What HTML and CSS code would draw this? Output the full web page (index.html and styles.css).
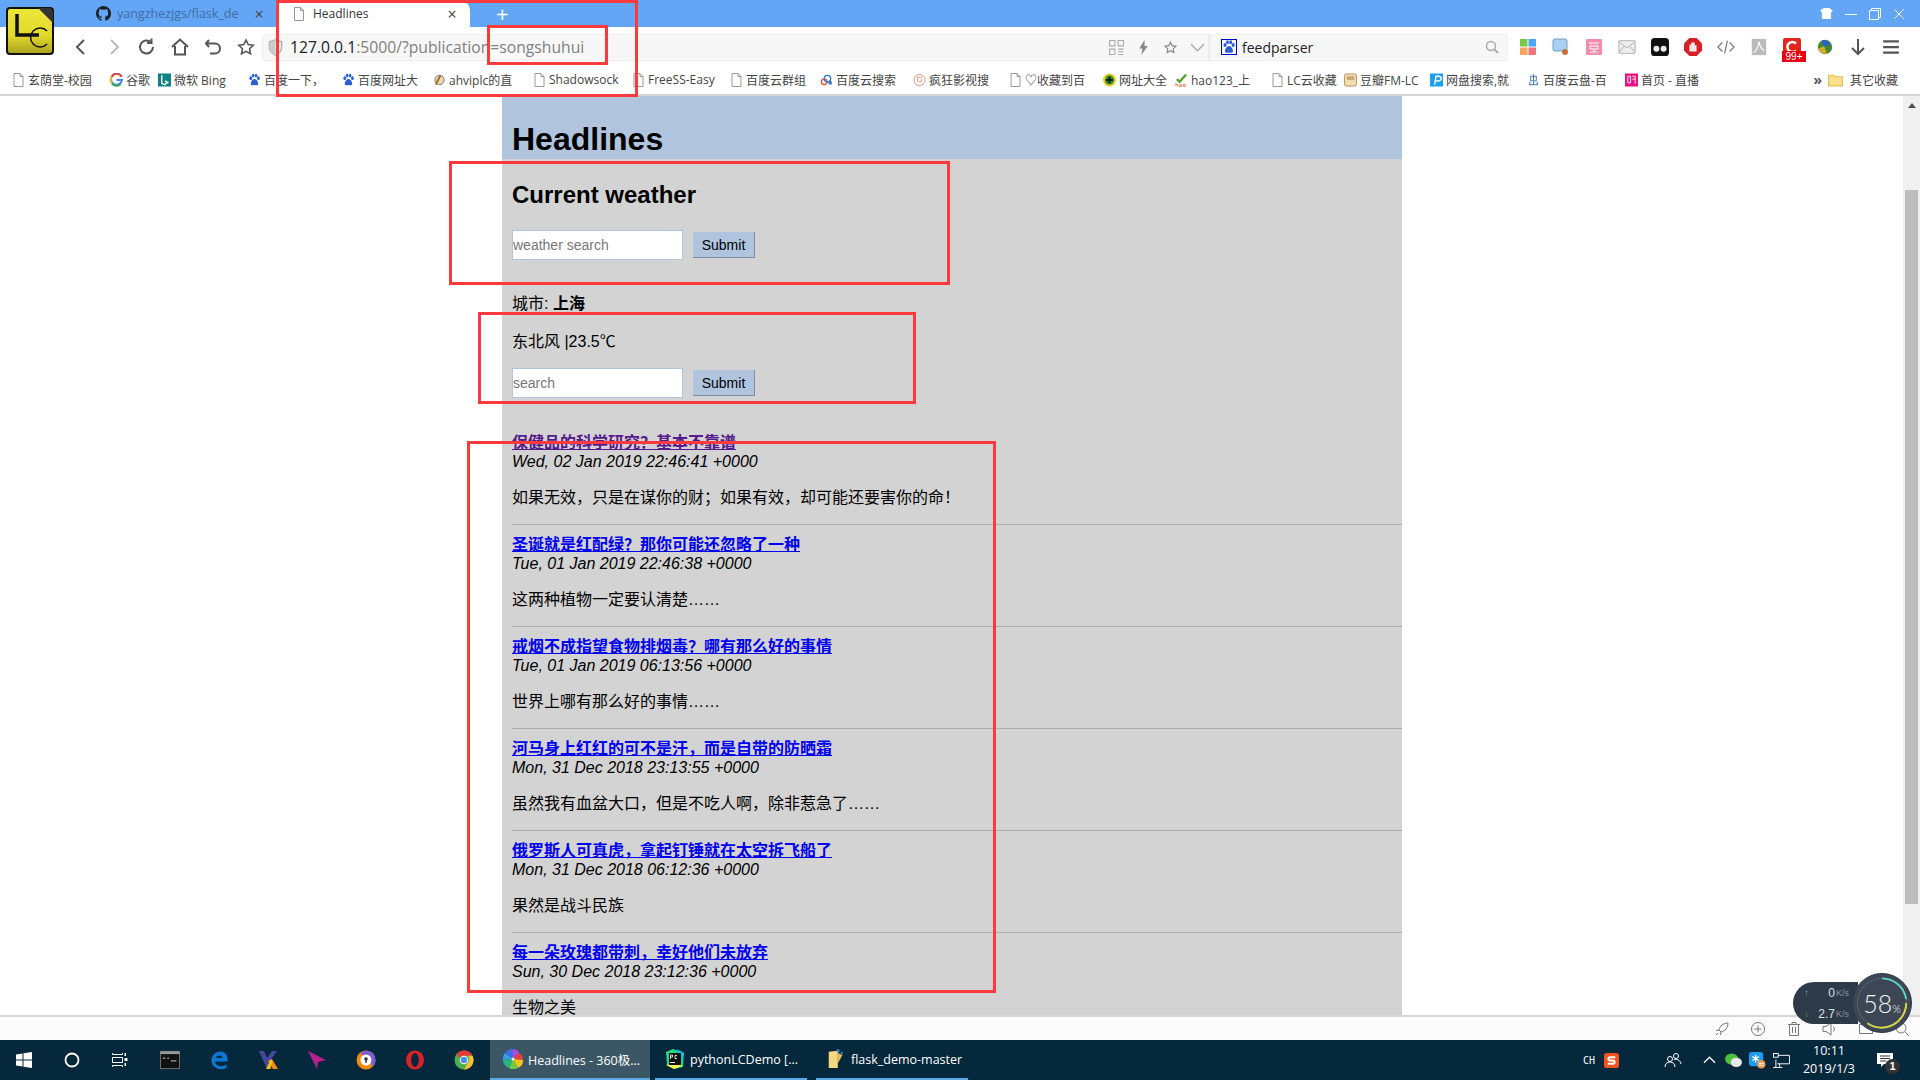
FILE: index.html
```html
<!DOCTYPE html>
<html lang="zh">
<head>
    <meta charset="UTF-8">
    <title>Headlines</title>
    <link rel="stylesheet" href="styles.css">
</head>
<body>
    <svg class="defs" width="0" height="0" aria-hidden="true">
        <symbol id="doc" viewBox="0 0 12 14">
            <path d="M1.5 .5h6l3 3v10h-9z M7.5 .5v3h3" fill="#fff" stroke="#999"/>
        </symbol>
        <symbol id="paw" viewBox="0 0 14 14">
            <ellipse cx="3" cy="5" rx="1.5" ry="2" fill="#2a5fd8"/>
            <ellipse cx="5.5" cy="2.2" rx="1.4" ry="2" fill="#2a5fd8"/>
            <ellipse cx="8.7" cy="2.2" rx="1.4" ry="2" fill="#2a5fd8"/>
            <ellipse cx="11.2" cy="5" rx="1.5" ry="2" fill="#2a5fd8"/>
            <path d="M7 6c-2 0-4 3-4 5s2 2 4 1.4c2 .6 4 .6 4-1.4s-2-5-4-5z" fill="#2a5fd8"/>
        </symbol>
        <linearGradient id="logo-fill" x1="0" y1="0" x2="0" y2="1">
            <stop offset="0" stop-color="#ece63a"/>
            <stop offset=".6" stop-color="#e2d92e"/>
            <stop offset="1" stop-color="#a8a01c"/>
        </linearGradient>
    </svg>

    <!-- Title bar and tabs -->
    <header class="titlebar">
        <div class="tab tab-idle">
            <svg class="tab-icon" viewBox="0 0 16 16"><path fill="#1b1f23" d="M8 0a8 8 0 0 0-2.5 15.6c.4.1.5-.2.5-.4v-1.4c-2.2.5-2.7-1-2.7-1-.4-.9-.9-1.200-.9-1.200-.7-.5.1-.5.1-.5.8.1 1.200.8 1.200.8.7 1.200 1.900.9 2.300.7.1-.5.3-.9.5-1.100-1.800-.2-3.700-.9-3.700-4 0-.9.3-1.600.8-2.100-.1-.2-.4-1 .1-2.100 0 0 .7-.2 2.200.8a7.600 7.600 0 0 1 4 0c1.500-1 2.200-.8 2.200-.8.4 1.100.2 1.900.1 2.100.5.6.8 1.300.8 2.100 0 3.100-1.900 3.800-3.700 4 .3.300.6.800.6 1.500v2.200c0 .2.1.5.6.4A8 8 0 0 0 8 0z"/></svg>
            <span class="tab-title">yangzhezjgs/flask_de</span>
            <span class="tab-close">×</span>
        </div>
        <div class="tab tab-active">
            <svg class="tab-icon tab-doc"><use href="#doc"/></svg>
            <span class="tab-title">Headlines</span>
            <span class="tab-close">×</span>
        </div>
        <span class="new-tab">+</span>
        <div class="window-btns">
            <svg viewBox="0 0 14 12" class="win-shirt"><path d="M4 0h6l4 3-2 2v7H2V5L0 3z" fill="#fff"/></svg>
            <svg viewBox="0 0 12 12" class="win-btn"><path d="M0 6.500h12" stroke="#fff" fill="none"/></svg>
            <svg viewBox="0 0 12 12" class="win-btn"><path d="M.5 2.500h9v9h-9z M2.500 2.500v-2h9v9h-2" stroke="#fff" fill="none"/></svg>
            <svg viewBox="0 0 12 12" class="win-btn"><path d="M1 1l10 10M11 1L1 11" stroke="#fff" fill="none"/></svg>
        </div>
    </header>

    <!-- Toolbar -->
    <nav class="toolbar">
        <div class="nav-btns">
            <svg viewBox="0 0 20 20"><path d="M13 3l-7 7 7 7" stroke="#555" stroke-width="2" fill="none"/></svg>
            <svg viewBox="0 0 20 20"><path d="M7 3l7 7-7 7" stroke="#bbb" stroke-width="2" fill="none"/></svg>
            <svg viewBox="0 0 20 20"><path d="M16 10a6.500 6.500 0 1 1-2-4.700M14.500 1.500v4.500H10" stroke="#555" stroke-width="2" fill="none"/></svg>
            <svg viewBox="0 0 20 20"><path d="M2 10l8-7.500 8 7.500M5 9v8.500h10V9" stroke="#555" stroke-width="2" fill="none"/></svg>
            <svg viewBox="0 0 20 20"><path d="M6 3L3 6.500 6 10M3.500 6.500H12a4.800 4.800 0 0 1 0 10H7" stroke="#555" stroke-width="2" fill="none"/></svg>
            <svg viewBox="0 0 20 20"><path d="M10 3l2.200 4.600 5 .7-3.600 3.500.9 5L10 14.400l-4.500 2.400.9-5L2.800 8.300l5-.7z" stroke="#555" stroke-width="1.600" fill="none"/></svg>
        </div>
        <div class="address">
            <svg class="shield" viewBox="0 0 16 18"><path d="M8 1l6.500 2v6c0 4-3 6.500-6.500 8-3.500-1.500-6.500-4-6.500-8V3z" fill="none" stroke="#aaa" stroke-width="1.500"/><path d="M8 1v16c-3.500-1.500-6.500-4-6.500-8V3z" fill="#ccc"/></svg>
            <span class="url"><span class="url-host">127.0.0.1</span>:5000/?publication=songshuhui</span>
            <div class="address-icons">
                <svg viewBox="0 0 14 14"><path d="M.5.5h5v5h-5z M8.500.5h5v5h-5z M.5 8.500h5v5h-5z M8.500 8.500h5 M8.500 11h5 M8.500 13.500h5" stroke="#aaa" fill="none"/></svg>
                <svg viewBox="0 0 14 14"><path d="M8 0L3 8h3l-1 6 6-8.500H8z" fill="#888"/></svg>
                <svg viewBox="0 0 20 20"><path d="M10 3l2.200 4.600 5 .7-3.600 3.500.9 5L10 14.400l-4.500 2.400.9-5L2.800 8.300l5-.7z" stroke="#888" stroke-width="1.600" fill="none"/></svg>
                <svg viewBox="0 0 14 14"><path d="M1 4l6 6 6-6" stroke="#aaa" stroke-width="1.500" fill="none"/></svg>
            </div>
        </div>
        <div class="search-box">
            <span class="search-logo"><svg viewBox="0 0 14 14"><use href="#paw"/></svg></span>
            <span class="search-text">feedparser</span>
            <svg class="search-icon" viewBox="0 0 14 14"><circle cx="6" cy="6" r="4.500" stroke="#aaa" stroke-width="1.500" fill="none"/><path d="M9.500 9.500l3.500 3.500" stroke="#aaa" stroke-width="2"/></svg>
        </div>
        <div class="ext-icons">
            <svg viewBox="0 0 18 18"><rect x="1" y="1" width="7.500" height="7.500" fill="#7ac943"/><rect x="9.500" y="1" width="7.500" height="7.500" fill="#4aa8f5"/><rect x="1" y="9.500" width="7.500" height="7.500" fill="#f7a660"/><rect x="9.500" y="9.500" width="7.500" height="7.500" fill="#f2737c"/></svg>
            <svg viewBox="0 0 18 18"><rect x="1" y="1" width="14" height="12" rx="2" fill="#a9d2f2" stroke="#6f9fc7"/><circle cx="13" cy="14" r="3" fill="#c96f36"/></svg>
            <svg viewBox="0 0 18 18"><rect x="1" y="1" width="16" height="16" rx="1" fill="#f58cae"/><path d="M4 5h10M5 8h8v3H5zM9 11v5M5 15l3-2M13 15l-3-2" stroke="#fff" fill="none"/></svg>
            <svg viewBox="0 0 20 18"><rect x="1" y="2" width="18" height="14" rx="1" fill="#eee" stroke="#aaa"/><path d="M1 3l9 7 9-7M1 15l6-7M19 15l-6-7" stroke="#aaa" fill="none"/></svg>
            <svg viewBox="0 0 20 20"><rect width="20" height="20" rx="4" fill="#111"/><circle cx="6" cy="12" r="3.300" fill="#eee"/><circle cx="14" cy="12" r="3.300" fill="#eee"/></svg>
            <svg viewBox="0 0 20 20"><path d="M6 0h8l6 6v8l-6 6H6l-6-6V6z" fill="#d81f26"/><path d="M7 15V7.500M9 15V5M11 15V5M13 15V8" stroke="#fff" stroke-width="1.800"/></svg>
            <svg viewBox="0 0 20 18"><path d="M6 4L1 9l5 5M14 4l5 5-5 5M11.500 2l-3 14" stroke="#777" stroke-width="1.300" fill="none"/></svg>
            <svg viewBox="0 0 18 20"><rect x="1" y="1" width="16" height="18" fill="#bbb"/><path d="M3 16c3-1 5-6 6-12 1 5 3 9 6 10" stroke="#fff" stroke-width="1.200" fill="none"/></svg>
            <span class="ext-badge-wrap">
                <svg viewBox="0 0 18 18"><rect width="18" height="18" rx="2" fill="#e1251b"/><path d="M13 5.500a5 5 0 1 0 0 7" stroke="#fff" stroke-width="2.500" fill="none"/></svg>
                <span class="ext-badge">99+</span>
            </span>
            <svg viewBox="0 0 20 20"><circle cx="10" cy="10" r="8" fill="#3e8a2e"/><path d="M6 3c4-2 8 0 10 4l-7 3z" fill="#2a62c9"/><path d="M2 12l7-3 3 8c-4 2-8-1-10-5z" fill="#d9a92a"/></svg>
            <svg viewBox="0 0 16 18"><path d="M8 1v15M2 10l6 6 6-6" stroke="#555" stroke-width="2" fill="none"/></svg>
            <svg viewBox="0 0 16 14"><path d="M1 2h14M1 7h14M1 12h14" stroke="#555" stroke-width="2" fill="none"/></svg>
        </div>
    </nav>

    <!-- Bookmarks -->
    <div class="bookmarks">
        <a class="bm"><svg class="bm-icon"><use href="#doc"/></svg>玄荫堂-校园</a>
        <a class="bm"><svg class="bm-icon" viewBox="0 0 14 14"><path d="M12.500 3.500A6 6 0 1 0 13 7H7" stroke="#4285f4" stroke-width="2" fill="none"/><path d="M12.500 3.500A6 6 0 0 0 2 3.500" stroke="#ea4335" stroke-width="2" fill="none"/><path d="M2 3.500a6 6 0 0 0 0 7" stroke="#fbbc05" stroke-width="2" fill="none"/><path d="M2 10.500a6 6 0 0 0 9.500 1" stroke="#34a853" stroke-width="2" fill="none"/></svg>谷歌</a>
        <a class="bm"><svg class="bm-icon" viewBox="0 0 14 14"><rect width="14" height="14" fill="#0c8484"/><path d="M4 2v8.500l3 1.500 3.500-2.500-3-1.500" stroke="#fff" stroke-width="1.500" fill="none"/></svg>微软 Bing</a>
        <a class="bm"><svg class="bm-icon"><use href="#paw"/></svg>百度一下，</a>
        <a class="bm"><svg class="bm-icon"><use href="#paw"/></svg>百度网址大</a>
        <a class="bm"><svg class="bm-icon" viewBox="0 0 14 14"><circle cx="7" cy="7" r="5" fill="#e9d9b0" stroke="#777"/><path d="M3 12l5-10" stroke="#a5671f" stroke-width="2"/></svg>ahviplc的直</a>
        <a class="bm"><svg class="bm-icon"><use href="#doc"/></svg>Shadowsock</a>
        <a class="bm"><svg class="bm-icon"><use href="#doc"/></svg>FreeSS-Easy</a>
        <a class="bm"><svg class="bm-icon"><use href="#doc"/></svg>百度云群组</a>
        <a class="bm"><svg class="bm-icon" viewBox="0 0 14 14"><circle cx="4.500" cy="9" r="3" fill="none" stroke="#e8513a" stroke-width="1.500"/><circle cx="8" cy="5.500" r="3.500" fill="none" stroke="#2c7bd8" stroke-width="1.500"/><circle cx="11" cy="10" r="2" fill="#2c7bd8"/></svg>百度云搜索</a>
        <a class="bm"><svg class="bm-icon" viewBox="0 0 14 14"><circle cx="7" cy="7" r="6" fill="#fff" stroke="#e98c78"/><path d="M4 4h6M5 4v5M9 6v3H6" stroke="#e98c78" fill="none"/></svg>疯狂影视搜</a>
        <a class="bm"><svg class="bm-icon"><use href="#doc"/></svg>♡收藏到百</a>
        <a class="bm"><svg class="bm-icon" viewBox="0 0 14 14"><circle cx="7" cy="7" r="7" fill="#f3c820"/><circle cx="7" cy="7" r="5" fill="#2d9a2d"/><path d="M3.500 7h7M7 3.500v7" stroke="#111" stroke-width="2"/></svg>网址大全</a>
        <a class="bm"><svg class="bm-icon" viewBox="0 0 14 14"><path d="M2 6l3 3 7-8" stroke="#4fa528" stroke-width="2.500" fill="none"/><path d="M1 14v-4M1 12h2v2M5 12h2v2H5zM9 12h2v2H9z" stroke="#e9621c" stroke-width=".8" fill="none"/></svg>hao123_上</a>
        <a class="bm"><svg class="bm-icon"><use href="#doc"/></svg>LC云收藏</a>
        <a class="bm"><svg class="bm-icon" viewBox="0 0 14 14"><rect x=".5" y=".5" width="13" height="13" rx="2" fill="#f1dcb4" stroke="#b78c52"/><rect x="3" y="3" width="8" height="4" fill="#c9a877"/></svg>豆瓣FM-LC</a>
        <a class="bm"><svg class="bm-icon" viewBox="0 0 14 14"><rect width="14" height="14" fill="#1b9df0"/><path d="M5 12l1.500-9h3a2 2 0 0 1 0 5H6" stroke="#fff" stroke-width="1.500" fill="none"/></svg>网盘搜索,就</a>
        <a class="bm"><svg class="bm-icon" viewBox="0 0 14 14"><path d="M4 3h6v5H4zM7 1v7M2 12h10M3 9v3M7 9v3M11 9v3" stroke="#3670a8" fill="none"/></svg>百度云盘-百</a>
        <a class="bm"><svg class="bm-icon" viewBox="0 0 14 14"><rect width="14" height="14" fill="#e6127d"/><path d="M3 3h3v7H3zM8 3h3v8M8 6h3" stroke="#fff" fill="none"/></svg>首页 - 直播</a>
        <span class="bm-more">»</span>
        <a class="bm"><svg class="bm-icon bm-folder" viewBox="0 0 14 12"><path d="M.5 1.500h5l1 1.500h7v8.500H.5z" fill="#fbe08a" stroke="#e2bf5a"/></svg>其它收藏</a>
    </div>

    <!-- Page in the browser window -->
    <div class="viewport">
        <main class="page">
            <div class="page-header">
                <h1>Headlines</h1>
            </div>
            <div class="page-body">
                <h2>Current weather</h2>
                <form class="search-form">
                    <input type="text" placeholder="weather search">
                    <button type="button">Submit</button>
                </form>
                <p class="city">城市: <b>上海</b></p>
                <p class="wind">东北风 |23.5℃</p>
                <form class="search-form">
                    <input type="text" placeholder="search">
                    <button type="button">Submit</button>
                </form>

                <article class="item">
                    <a class="visited" href="#"><b>保健品的科学研究？基本不靠谱</b></a>
                    <i>Wed, 02 Jan 2019 22:46:41 +0000</i>
                    <p>如果无效，只是在谋你的财；如果有效，却可能还要害你的命！</p>
                </article>
                <article class="item">
                    <a href="#"><b>圣诞就是红配绿？那你可能还忽略了一种</b></a>
                    <i>Tue, 01 Jan 2019 22:46:38 +0000</i>
                    <p>这两种植物一定要认清楚……</p>
                </article>
                <article class="item">
                    <a href="#"><b>戒烟不成指望食物排烟毒？哪有那么好的事情</b></a>
                    <i>Tue, 01 Jan 2019 06:13:56 +0000</i>
                    <p>世界上哪有那么好的事情……</p>
                </article>
                <article class="item">
                    <a href="#"><b>河马身上红红的可不是汗，而是自带的防晒霜</b></a>
                    <i>Mon, 31 Dec 2018 23:13:55 +0000</i>
                    <p>虽然我有血盆大口，但是不吃人啊，除非惹急了……</p>
                </article>
                <article class="item">
                    <a href="#"><b>俄罗斯人可真虎，拿起钉锤就在太空拆飞船了</b></a>
                    <i>Mon, 31 Dec 2018 06:12:36 +0000</i>
                    <p>果然是战斗民族</p>
                </article>
                <article class="item">
                    <a href="#"><b>每一朵玫瑰都带刺，幸好他们未放弃</b></a>
                    <i>Sun, 30 Dec 2018 23:12:36 +0000</i>
                    <p>生物之美</p>
                </article>
            </div>
        </main>
        <div class="scrollbar">
            <span class="scroll-up"></span>
            <span class="scroll-thumb"></span>
        </div>
    </div>

    <!-- Status bar -->
    <div class="statusbar">
        <svg viewBox="0 0 16 16"><path d="M14 2c-5 0-8 3-9 7l2 2c4-1 7-4 7-9zM5 9L2 9.500M7 11l-.5 3M4 12l-2 2" stroke="#777" fill="none"/></svg>
        <svg viewBox="0 0 16 16"><circle cx="8" cy="8" r="6.500" stroke="#777" fill="none"/><path d="M8 4.500v7M4.500 8h7" stroke="#777"/></svg>
        <svg viewBox="0 0 16 16"><path d="M2 3.500h12M6 3.500V1.500h4v2M3.500 3.500v11h9v-11M6.500 6v6M9.500 6v6" stroke="#777" fill="none"/></svg>
        <svg viewBox="0 0 16 16"><path d="M1 5.500h3L9 2v12L4 10.500H1zM11.500 5.500a4 4 0 0 1 0 5" stroke="#777" fill="none"/></svg>
        <svg viewBox="0 0 16 16"><path d="M1.500 3.500h13v9h-13z" stroke="#777" fill="none"/></svg>
        <svg viewBox="0 0 16 16"><circle cx="7" cy="7" r="5" stroke="#777" fill="none"/><path d="M11 11l4 4" stroke="#777"/></svg>
    </div>

    <!-- Taskbar -->
    <footer class="taskbar">
        <div class="task-icons">
            <svg viewBox="0 0 16 16"><path d="M0 2.500l6.500-1v6H0zM7.500 1.300L16 0v7.500H7.500zM0 8.500h6.500v6l-6.500-1zM7.500 8.500H16V16l-8.500-1.300z" fill="#fff"/></svg>
            <svg viewBox="0 0 16 16"><circle cx="8" cy="8" r="6.500" stroke="#fff" stroke-width="1.800" fill="none"/></svg>
            <svg viewBox="0 0 16 16"><path d="M.5 1v1.500h10V1M.5 5.500h10v5H.5zM.5 15v-1.500h10V15" stroke="#fff" fill="none"/><rect x="12.500" y="1" width="1.500" height="3" fill="#fff"/><rect x="12.500" y="6" width="3" height="3" fill="#fff"/><rect x="12.500" y="11" width="1.500" height="3" fill="#fff"/></svg>
            <svg viewBox="0 0 22 20"><rect x=".5" y=".5" width="21" height="19" fill="#111" stroke="#777"/><rect x=".5" y=".5" width="21" height="3" fill="#999"/><path d="M3 8h3M8 8h2M12 11h6" stroke="#ddd"/></svg>
            <svg viewBox="0 0 20 20"><path d="M18.500 11.500H6c.3 5 7.500 6 11.500 3v3.500c-6 2.500-15 .5-15-7.500C2.500 4 9 0 14 2 18 3.500 19 8 18.500 11.500zM13.500 8c0-3.500-6-3.500-7 0z" fill="#0c78d6"/></svg>
            <svg viewBox="0 0 20 20"><path d="M1 1h5l8 18H9z" fill="#46489e"/><path d="M19 1h-5L7 11l2 4z" fill="#46489e"/><path d="M10 11l4-2 6 10h-5z" fill="#f28c0f"/><path d="M8 19l5-10 1.500 3L12 19z" fill="#fac30a"/></svg>
            <svg viewBox="0 0 20 20"><path d="M1 1l18 9-8 2-1 7-3-6z" fill="#b8208e"/></svg>
            <svg viewBox="0 0 20 20"><circle cx="10" cy="10" r="9.500" fill="#f28c0f"/><path d="M10 .5A9.500 9.500 0 0 1 19.500 10c0 3-1 5-3 7-2-9-7-11-12-13 2-2 3.500-3.500 5.500-3.500z" fill="#7a5dd8"/><circle cx="10" cy="10" r="5.500" fill="#fff"/><circle cx="10" cy="9" r="1.800" fill="#333"/><rect x="9.300" y="9.500" width="1.400" height="3.500" fill="#333"/></svg>
            <svg viewBox="0 0 20 20"><ellipse cx="10" cy="10" rx="9" ry="9.500" fill="#d8232a"/><ellipse cx="10" cy="10" rx="3.800" ry="7" fill="#05283d"/></svg>
            <svg viewBox="0 0 20 20"><circle cx="10" cy="10" r="9.500" fill="#4caf50"/><path d="M10 .5a9.500 9.500 0 0 1 8.500 5.200H10a4.300 4.300 0 0 0-4 2.800L2.700 4A9.500 9.500 0 0 1 10 .5z" fill="#e53935"/><path d="M18.500 5.700A9.500 9.500 0 0 1 10 19.500l4-7a4.300 4.300 0 0 0-.2-6.800z" fill="#fbc02d"/><circle cx="10" cy="10" r="4.300" fill="#fff"/><circle cx="10" cy="10" r="3.300" fill="#4a90e2"/></svg>
        </div>
        <div class="task-item task-item-active">
            <svg viewBox="0 0 20 20"><path d="M10 10V0a7 7 0 0 1 6 4z" fill="#b04be0"/><path d="M10 10l6-6a8 8 0 0 1 4 7z" fill="#e8403a"/><path d="M10 10l10 1a8 8 0 0 1-5 8z" fill="#f5c518"/><path d="M10 10l5 9a9 9 0 0 1-9 0z" fill="#74c947"/><path d="M10 10l-4 9a9 9 0 0 1-6-8z" fill="#29b57e"/><path d="M10 10L0 11a9 9 0 0 1 2-7z" fill="#33a2e8"/><path d="M10 10L2 4a9 9 0 0 1 8-4z" fill="#3b6fe0"/><circle cx="10" cy="10" r="1.500" fill="#fff"/></svg>
            <span>Headlines - 360极...</span>
        </div>
        <div class="task-item">
            <svg viewBox="0 0 20 20"><path d="M1 3l7-3 11 4-1 14-9 2-7-4z" fill="#21d789"/><path d="M12 0l7 4-2 8z" fill="#07c3f2"/><path d="M1 16l8 4 8-3-2-4z" fill="#fcf84a"/><rect x="4" y="4" width="12" height="12" fill="#111"/><path d="M5.500 10V6h2v2h-2M12 6.500h-2v3h2" stroke="#fff" stroke-width=".8" fill="none"/><rect x="5" y="13" width="5" height="1" fill="#fff"/></svg>
            <span>pythonLCDemo [...</span>
        </div>
        <div class="task-item">
            <svg viewBox="0 0 20 22"><path d="M2 3l10-1v19H2z" fill="#f6d77d"/><path d="M12 4l5 3-5 9z" fill="#e5bc58"/><path d="M11 0l3 1-1 4-2-2zM15 3l3 1-2 3z" fill="#2f8fe0"/></svg>
            <span>flask_demo-master</span>
        </div>
        <div class="tray">
            <span class="tray-lang">CH</span>
            <svg class="tray-sogou" viewBox="0 0 16 16"><rect width="16" height="16" rx="3" fill="#f0531f"/><path d="M12 4.500H6a1.800 1.800 0 0 0 0 3.500h4a1.800 1.800 0 0 1 0 3.500H4" stroke="#fff" stroke-width="2.200" fill="none"/></svg>
            <svg class="tray-people" viewBox="0 0 18 16"><circle cx="6" cy="7" r="2.500" stroke="#fff" fill="none"/><circle cx="12" cy="4" r="2.500" stroke="#fff" fill="none"/><path d="M1 15c0-3 2-5 5-5s5 2 5 5M10 7.500c4-.5 6.500 1 7 4.500" stroke="#fff" fill="none"/></svg>
            <svg class="tray-chevron" viewBox="0 0 14 8"><path d="M1 7l6-6 6 6" stroke="#fff" stroke-width="1.300" fill="none"/></svg>
            <svg class="tray-wechat" viewBox="0 0 18 16"><ellipse cx="7" cy="6.500" rx="7" ry="6" fill="#4cc13c"/><ellipse cx="12" cy="10" rx="6" ry="5" fill="#e8e8e8"/></svg>
            <svg class="tray-star" viewBox="0 0 18 18"><rect width="15" height="15" rx="3" fill="#1c9bf0"/><path d="M7 3v8M3.500 5l7 4M10.500 5l-7 4" stroke="#fff" stroke-width="1.500"/><circle cx="13" cy="13" r="4.500" fill="#f29a4a"/><path d="M10.500 12h5M10.500 14h5" stroke="#fff"/></svg>
            <svg class="tray-net" viewBox="0 0 18 16"><path d="M4.500 2.500h13v9h-13M3 7v8M0 15.500h10M7 11.500v4" stroke="#fff" fill="none"/><rect x=".5" y=".5" width="5" height="4" fill="#05283d" stroke="#fff"/></svg>
            <div class="tray-clock"><span>10:11</span><span>2019/1/3</span></div>
            <div class="tray-note">
                <svg viewBox="0 0 16 16"><path d="M0 1h16v11H7l-3 3v-3H0z" fill="#fff"/><path d="M3 4h10M3 6.500h10M3 9h6" stroke="#333"/></svg>
                <span class="note-count">1</span>
            </div>
        </div>
    </footer>

    <!-- Floating things over the window -->
    <svg class="app-logo" viewBox="0 0 48 48">
        <rect x="1" y="1" width="46" height="46" rx="3" fill="url(#logo-fill)" stroke="#111" stroke-width="2"/>
        <path d="M32 1h12l3 3v12z" fill="#333"/>
        <path d="M11 7v21h22" stroke="#111" stroke-width="3.500" fill="none"/>
        <path d="M41 24a9.500 9.500 0 1 0 0 13" stroke="#111" stroke-width="1.500" fill="none"/>
    </svg>

    <div class="net-widget">
        <div class="net-pill">
            <div class="net-row"><span class="arrow-up">↑</span><b>0</b><small>K/s</small></div>
            <div class="net-row"><span class="arrow-down">↓</span><b>2.7</b><small>K/s</small></div>
        </div>
        <div class="net-ring">
            <svg viewBox="0 0 60 60"><circle cx="30" cy="30" r="25.500" stroke="#5a6473" stroke-width="1" fill="none"/><path d="M30 4.500A25.500 25.500 0 0 1 55 26" stroke="#5ed4c0" stroke-width="2" fill="none"/><path d="M55 30A25.500 25.500 0 0 1 15 51" stroke="#d9d84a" stroke-width="2" fill="none"/></svg>
            <span class="ring-value">58<small>%</small></span>
        </div>
    </div>

    <span class="mark mark-tab"></span>
    <span class="mark mark-url"></span>
    <span class="mark mark-weather"></span>
    <span class="mark mark-search"></span>
    <span class="mark mark-list"></span>
</body>
</html>
```

FILE: styles.css
```css
/* Global Styles */
html, body {
    margin: 0;
    padding: 0;
    height: 100%;
}

body {
    width: 1920px;
    height: 1080px;
    overflow: hidden;
    display: flex;
    flex-direction: column;
    position: relative;
    font-family: "Liberation Sans", "Noto Sans CJK SC", sans-serif;
    background: #fff;
}

.defs {
    position: absolute;
}

/* Title bar */
.titlebar {
    height: 27px;
    flex: none;
    background: #62a6f5;
    display: flex;
    align-items: stretch;
    padding-left: 96px;
    font-family: "Open Sans", "Noto Sans CJK SC", sans-serif;
    font-size: 12px;
}

.tab {
    display: flex;
    align-items: center;
    box-sizing: border-box;
    padding-right: 6px;
}

.tab-idle {
    width: 181px;
    color: #3f6da3;
}

.tab-active {
    width: 193px;
    padding-left: 16px;
    background: #fff;
    color: #333;
    border-radius: 8px 10px 0 0;
}

.tab-icon {
    width: 15px;
    height: 15px;
    flex: none;
    margin-right: 6px;
}

.tab-doc {
    width: 12px;
    height: 14px;
    margin-right: 8px;
}

.tab-title {
    flex: 1;
    overflow: hidden;
    white-space: nowrap;
}

.tab-idle .tab-title {
    font-size: 12.5px;
}

.tab-close {
    font-size: 16px;
    color: #444;
    width: 24px;
    text-align: center;
}

.new-tab {
    color: #fff;
    font-size: 22px;
    line-height: 26px;
    margin-left: 26px;
}

.window-btns {
    margin-left: auto;
    display: flex;
    align-items: center;
    gap: 12px;
    padding-right: 15px;
}

.win-shirt {
    width: 13px;
    height: 11px;
}

.win-btn {
    width: 12px;
    height: 12px;
}

/* Toolbar */
.toolbar {
    height: 34px;
    flex: none;
    padding-top: 3px;
    background: #fff;
    display: flex;
    align-items: center;
    font-family: "Open Sans", "Noto Sans CJK SC", sans-serif;
}

.nav-btns {
    display: flex;
    gap: 13px;
    padding-left: 71px;
    width: 262px;
    box-sizing: border-box;
}

.nav-btns svg {
    width: 20px;
    height: 20px;
    flex: none;
}

.address {
    width: 947px;
    height: 27px;
    box-sizing: border-box;
    display: flex;
    align-items: center;
    background: #f7f7f7;
    border: 1px solid #eee;
    border-radius: 4px 0 0 4px;
    padding-left: 5px;
}

.shield {
    width: 15px;
    height: 17px;
    margin-right: 7px;
}

.url {
    font-size: 15.7px;
    color: #808080;
}

.url-host {
    color: #222;
}

.address-icons {
    margin-left: auto;
    display: flex;
    align-items: center;
    gap: 12px;
    padding-right: 3px;
}

.address-icons svg {
    width: 15px;
    height: 15px;
}

.search-box {
    width: 299px;
    height: 27px;
    box-sizing: border-box;
    display: flex;
    align-items: center;
    background: #f7f7f7;
    border: 1px solid #eee;
    border-left: 1px solid #e5e5e5;
    border-radius: 0 4px 4px 0;
    padding: 0 8px 0 11px;
    font-size: 14px;
    color: #222;
}

.search-logo {
    width: 16px;
    height: 16px;
    border: 1px solid #00c;
    box-sizing: border-box;
    margin-right: 5px;
    display: flex;
}

.search-icon {
    width: 14px;
    height: 14px;
    margin-left: auto;
}

.ext-icons {
    display: flex;
    align-items: center;
    gap: 15px;
    padding-left: 11px;
}

.ext-icons > svg, .ext-badge-wrap svg {
    width: 18px;
    height: 18px;
    display: block;
}

.ext-badge-wrap {
    position: relative;
}

.ext-badge {
    position: absolute;
    left: -1px;
    top: 13px;
    width: 24px;
    background: #e60012;
    color: #fff;
    font: 10px/11px "Liberation Sans", sans-serif;
    text-align: center;
}

/* Bookmarks */
.bookmarks {
    height: 32px;
    flex: none;
    box-sizing: border-box;
    border-bottom: 2px solid #d6d6d6;
    padding: 1px 0 0 12px;
    display: grid;
    grid-template-columns: 98px 48px 90px 94px 91px 100px 99px 98px 90px 93px 96px 94px 72px 96px 73px 86px 97px 98px 187px 16px auto;
    align-items: center;
    font-family: "Open Sans", "Noto Sans CJK SC", sans-serif;
    font-size: 12px;
    color: #444;
}

.bm {
    display: flex;
    align-items: center;
    white-space: nowrap;
}

.bm-icon {
    width: 13px;
    height: 14px;
    flex: none;
    margin-right: 3px;
}

.bm-folder {
    width: 15px;
    margin-right: 7px;
}

.bm-more {
    font-size: 14px;
    font-weight: 700;
    color: #555;
    text-align: right;
    padding-right: 6px;
    grid-column: 20;
}

.bookmarks .bm:nth-last-child(1) {
    grid-column: 21;
}

/* Page content */
.viewport {
    flex: 1;
    min-height: 0;
    display: flex;
    overflow: hidden;
}

.page {
    width: 900px;
    margin-left: 502px;
    background: #d3d3d3;
    font-size: 16px;
    color: #000;
}

.page-header {
    background: #b0c4de;
    height: 63px;
    padding: 0 10px;
    box-sizing: border-box;
}

h1 {
    margin: 0;
    padding-top: 25px;
    font-size: 32px;
    line-height: 37px;
}

.page-body {
    padding: 0 0 0 10px;
}

h2 {
    margin: 0;
    padding-top: 22px;
    font-size: 24px;
    line-height: 28px;
}

.search-form {
    display: flex;
    align-items: center;
    gap: 10px;
}

h2 + .search-form {
    margin-top: 21px;
}

.search-form input {
    width: 171px;
    height: 30px;
    box-sizing: border-box;
    padding: 0;
    border: 1px solid #b0c4de;
    background: #fff;
    font: 14px "Liberation Sans", sans-serif;
}

.search-form input::placeholder {
    color: #777;
}

.search-form button {
    width: 62px;
    height: 26px;
    padding: 0;
    border: none;
    border-right: 1px solid #7d8ea5;
    border-bottom: 1px solid #7d8ea5;
    background: #b0c4de;
    color: #000;
    font: 14px "Liberation Sans", sans-serif;
}

.city {
    margin: 33px 0 0;
    line-height: 21px;
}

.wind {
    margin: 17px 0 0;
    line-height: 21px;
}

.wind + .search-form {
    margin-top: 16px;
}

.item {
    width: 890px;
    border-bottom: 1px solid #aaa;
    height: 102px;
    box-sizing: border-box;
    padding-top: 10px;
}

.search-form + .item {
    margin-top: 25px;
}

.item a, .item i {
    display: block;
    line-height: 19px;
}

.item a {
    color: #00e;
}

.item a.visited {
    color: #551a8b;
}

.item p {
    margin: 16px 0 0;
    line-height: 21px;
}

/* Scrollbar */
.scrollbar {
    width: 17px;
    margin-left: 501px;
    background: #f0f0f0;
    display: flex;
    flex-direction: column;
    align-items: center;
    padding-top: 7px;
    box-sizing: border-box;
}

.scroll-up {
    width: 0;
    height: 0;
    border-left: 4px solid transparent;
    border-right: 4px solid transparent;
    border-bottom: 5px solid #505050;
}

.scroll-thumb {
    width: 13px;
    height: 714px;
    margin-top: 82px;
    background: #bdbdbd;
}

/* Status bar */
.statusbar {
    height: 25px;
    flex: none;
    box-sizing: border-box;
    border-top: 2px solid #d6d6d6;
    background: #fcfcfc;
    display: flex;
    align-items: center;
    justify-content: flex-end;
    gap: 20px;
    padding-right: 10px;
}

.statusbar svg {
    width: 16px;
    height: 16px;
}

/* Taskbar */
.taskbar {
    height: 40px;
    flex: none;
    background: #05283d;
    display: flex;
    align-items: center;
    color: #fff;
    font-family: "Open Sans", "Noto Sans CJK SC", sans-serif;
    font-size: 12.5px;
}

.task-icons {
    display: flex;
    align-items: center;
    gap: 29px;
    padding-left: 16px;
    width: 490px;
    box-sizing: border-box;
}

.task-icons svg {
    width: 20px;
    height: 20px;
    flex: none;
}

.task-icons svg:nth-child(-n+3) {
    width: 16px;
    height: 16px;
    margin-right: 3px;
}

.task-item {
    width: 152px;
    height: 40px;
    box-sizing: border-box;
    margin-right: 9px;
    padding-left: 10px;
    display: flex;
    align-items: center;
    gap: 5px;
    border-bottom: 2px solid #5aa9e6;
    white-space: nowrap;
}

.task-item svg {
    width: 20px;
    height: 20px;
    flex: none;
}

.task-item-active {
    width: 160px;
    margin-right: 5px;
    padding-left: 13px;
    background: #3b5766;
}

.tray {
    margin-left: auto;
    display: flex;
    align-items: center;
    height: 40px;
}

.tray-lang {
    font: 10px "DejaVu Sans Mono", monospace;
    margin-right: 9px;
}

.tray-sogou {
    width: 15px;
    height: 15px;
    margin-right: 45px;
}

.tray-people {
    width: 18px;
    height: 16px;
    margin-right: 21px;
}

.tray-chevron {
    width: 13px;
    height: 8px;
    margin-right: 9px;
}

.tray-wechat {
    width: 17px;
    height: 15px;
    margin-right: 7px;
}

.tray-star {
    width: 17px;
    height: 17px;
    margin-right: 7px;
}

.tray-net {
    width: 17px;
    height: 15px;
    margin-right: 11px;
}

.tray-clock {
    width: 56px;
    display: flex;
    flex-direction: column;
    align-items: center;
    font: 12.5px/18px "Open Sans", sans-serif;
    margin-right: 20px;
}

.tray-note {
    width: 26px;
    margin-right: 17px;
    position: relative;
    display: flex;
}

.tray-note svg {
    width: 16px;
    height: 16px;
}

.note-count {
    position: absolute;
    left: 8px;
    top: 7px;
    width: 15px;
    height: 15px;
    border-radius: 50%;
    background: #333;
    font: 700 11px/15px "Liberation Sans", sans-serif;
    text-align: center;
}

/* Overlays */
.app-logo {
    position: absolute;
    left: 6px;
    top: 7px;
    width: 48px;
    height: 48px;
}

.net-widget {
    position: absolute;
    left: 1793px;
    top: 973px;
    display: flex;
    align-items: center;
}

.net-pill {
    width: 65px;
    height: 42px;
    border-radius: 21px 0 0 21px;
    background: #2f3a48;
    color: #dbe3ec;
    padding-left: 11px;
    box-sizing: border-box;
    font-size: 10px;
}

.net-row {
    height: 21px;
    display: flex;
    align-items: center;
    justify-content: flex-end;
    padding-right: 9px;
    gap: 1px;
}

.net-row span {
    margin-right: auto;
    font-weight: 700;
}

.net-row b {
    font-size: 12px;
    font-weight: 400;
}

.net-row small {
    font-size: 9px;
    color: #8b95a3;
}

.arrow-up {
    color: #4fb0e8;
}

.arrow-down {
    color: #3aa63a;
}

.net-ring {
    width: 60px;
    height: 60px;
    margin-left: -6px;
    border-radius: 50%;
    background: #3c4654;
    border: 1px solid #2f3a48;
    box-sizing: border-box;
    position: relative;
    display: flex;
    align-items: center;
    justify-content: center;
    color: #f2f4f6;
}

.net-ring svg {
    position: absolute;
    inset: 0;
}

.ring-value {
    font-family: Lato, sans-serif;
    font-weight: 300;
    font-size: 25px;
    white-space: nowrap;
}

.ring-value small {
    font-size: 11px;
}

/* Red marks drawn on the screenshot */
.mark {
    position: absolute;
    box-sizing: border-box;
    border: 3px solid #fb3a3e;
}

.mark-tab {
    left: 276px;
    top: 0;
    width: 362px;
    height: 97px;
}

.mark-url {
    left: 487px;
    top: 25px;
    width: 121px;
    height: 40px;
}

.mark-weather {
    left: 449px;
    top: 161px;
    width: 501px;
    height: 124px;
}

.mark-search {
    left: 478px;
    top: 312px;
    width: 438px;
    height: 92px;
}

.mark-list {
    left: 467px;
    top: 441px;
    width: 529px;
    height: 552px;
}
```
